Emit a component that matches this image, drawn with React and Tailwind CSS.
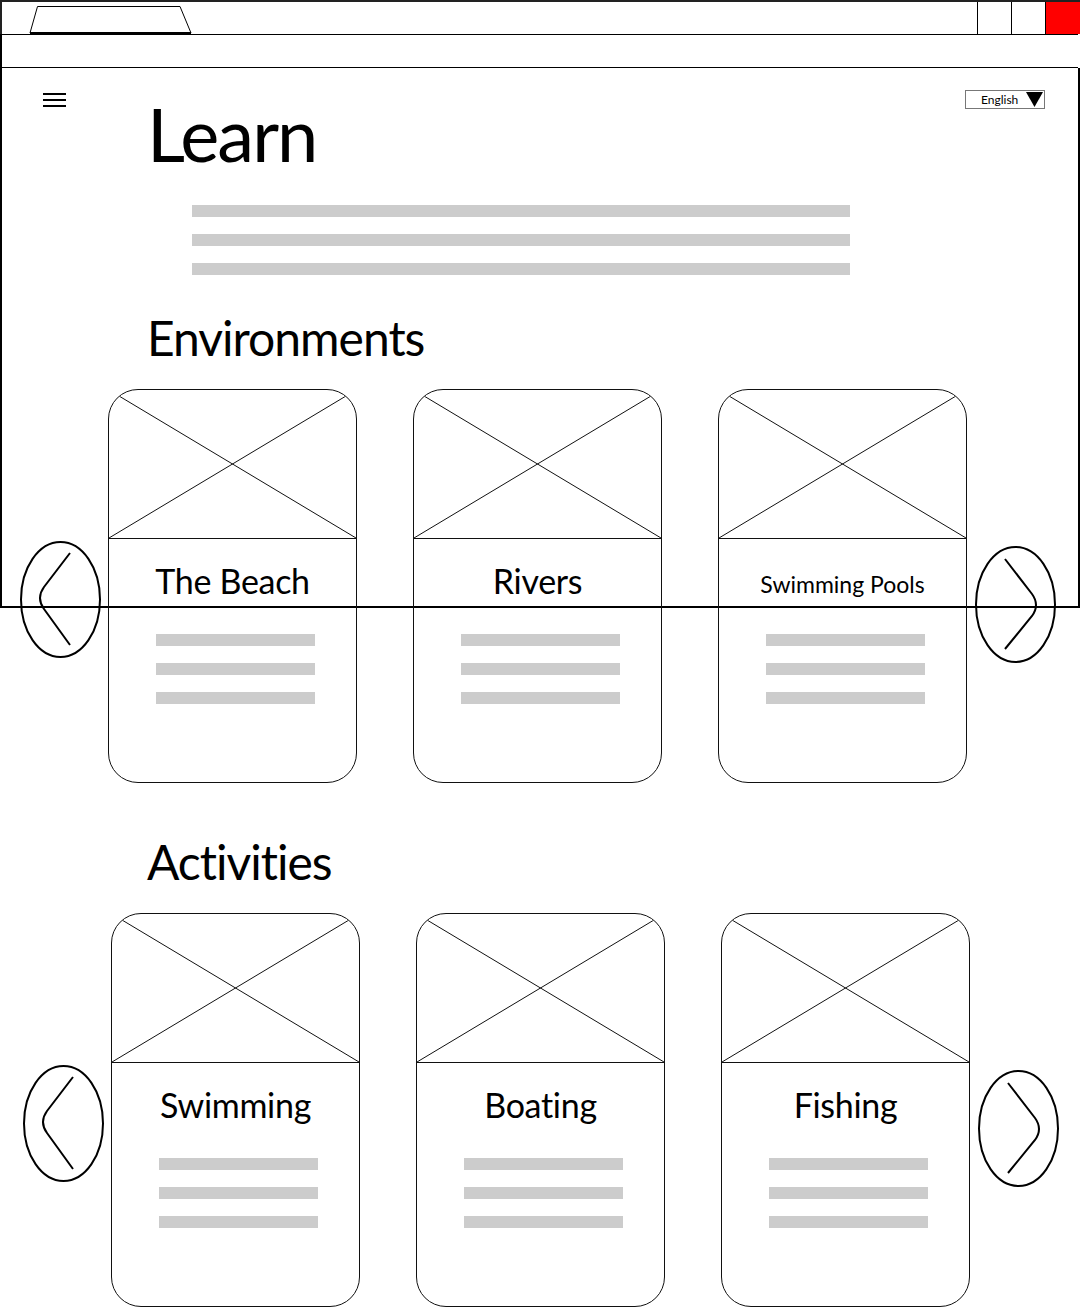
import React from 'react';

const Bar = ({ className = '' }) => <div className={`h-[12px] bg-[#cccccc] ${className}`} />;

const Hamburger = () => (
  <div className="flex flex-col gap-[4px] w-[23px] mt-[3px] ml-[41px] shrink-0">
    <span className="h-[2px] bg-black" />
    <span className="h-[2px] bg-black" />
    <span className="h-[2px] bg-black" />
  </div>
);

const LanguageSelect = () => (
  <div className="ml-auto mr-[33px] w-[80px] h-[19px] border border-[#777] flex items-center shrink-0">
    <span className="ml-[15px] text-[12px] leading-none text-black">English</span>
    <svg width="17" height="15" viewBox="0 0 17 15" className="ml-auto mr-[1px]">
      <polygon points="0,0 17,0 8.5,15" fill="#000" />
    </svg>
  </div>
);

const Arrow = ({ dir = 'left', className = '' }) => (
  <svg width="81" height="117" viewBox="0 0 81 117" className={`shrink-0 ${className}`}>
    <ellipse cx="40.5" cy="58.5" rx="39.5" ry="57.5" fill="none" stroke="#000" strokeWidth="2" />
    {dir === 'left' ? (
      <path d="M50 12 L24 46 Q16 57 24 68 L50 104" fill="none" stroke="#000" strokeWidth="2" />
    ) : (
      <path d="M30 13 L57 48 Q65 59 57 70 L30 103" fill="none" stroke="#000" strokeWidth="2" />
    )}
  </svg>
);

const Card = ({ title, small, className = '' }) => (
  <div className={`w-[249px] h-[394px] shrink-0 rounded-[30px] border border-[#111] overflow-hidden flex flex-col ${className}`}>
    <div className="h-[149px] border-b border-[#111] shrink-0">
      <svg width="247" height="148" viewBox="0 0 247 148" className="block">
        <line x1="0" y1="0" x2="247" y2="148" stroke="#111" strokeWidth="1" />
        <line x1="247" y1="0" x2="0" y2="148" stroke="#111" strokeWidth="1" />
      </svg>
    </div>
    <div className={`h-[95px] shrink-0 text-center text-black leading-none ${small ? 'pt-[34px] text-[23px]' : 'pt-[25px] text-[34px] tracking-[-0.3px]'}`}>
      {title}
    </div>
    <div className="flex flex-col gap-[17px] pl-[47px]">
      <Bar className="w-[159px]" />
      <Bar className="w-[159px]" />
      <Bar className="w-[159px]" />
    </div>
  </div>
);

const CardRow = ({ items, className = '' }) => (
  <div className={`flex items-start ${className}`}>
    <Arrow dir="left" className="mt-[152px]" />
    <div className="flex gap-[56px] ml-[7px]">
      {items.map((it) => (
        <Card key={it.title} {...it} />
      ))}
    </div>
    <Arrow dir="right" className="mt-[157px] ml-[8px]" />
  </div>
);

export default function App() {
  return (
    <div className="w-[1080px] h-[1308px] bg-white overflow-hidden font-['Lato',sans-serif] [font-variant-ligatures:none] text-black">
      {/* browser tab strip */}
      <div className="h-[34px] flex border-t-2 border-l-2 border-[#222]">
        <svg width="164" height="28" viewBox="0 0 164 28" className="ml-[27px] mt-[4px] shrink-0">
          <polygon points="8.5,0.5 151,0.5 162,27 1,27" fill="none" stroke="#000" strokeWidth="1" />
          <line x1="1" y1="27" x2="162" y2="27" stroke="#000" strokeWidth="2" />
        </svg>
        <div className="ml-auto flex h-full">
          <div className="w-[34px] border-l border-black" />
          <div className="w-[34px] border-l border-black" />
          <div className="w-[35px] border-l border-black bg-[#ff0000]" />
        </div>
      </div>
      {/* address bar */}
      <div className="h-[34px] border-y border-l-2 border-black mr-[2px]" />
      {/* page viewport */}
      <div className="h-[540px] border-x-2 border-b-2 border-black">
        <div className="flex items-start pt-[22px]">
          <Hamburger />
          <h1 className="ml-[81px] mt-[7px] text-[74px] leading-none tracking-[-2px] font-normal">Learn</h1>
          <LanguageSelect />
        </div>
        <div className="flex flex-col gap-[17px] mt-[34px] ml-[190px] w-[658px]">
          <Bar />
          <Bar />
          <Bar />
        </div>
        <h2 className="mt-[39px] ml-[145px] text-[48px] leading-none tracking-[-1px] font-normal">Environments</h2>
        <CardRow
          className="mt-[27px] ml-[18px]"
          items={[{ title: 'The Beach' }, { title: 'Rivers' }, { title: 'Swimming Pools', small: true }]}
        />
        <h2 className="mt-[55px] ml-[145px] text-[48px] leading-none tracking-[-1px] font-normal">Activities</h2>
        <CardRow
          className="mt-[27px] ml-[21px]"
          items={[{ title: 'Swimming' }, { title: 'Boating' }, { title: 'Fishing' }]}
        />
      </div>
    </div>
  );
}
